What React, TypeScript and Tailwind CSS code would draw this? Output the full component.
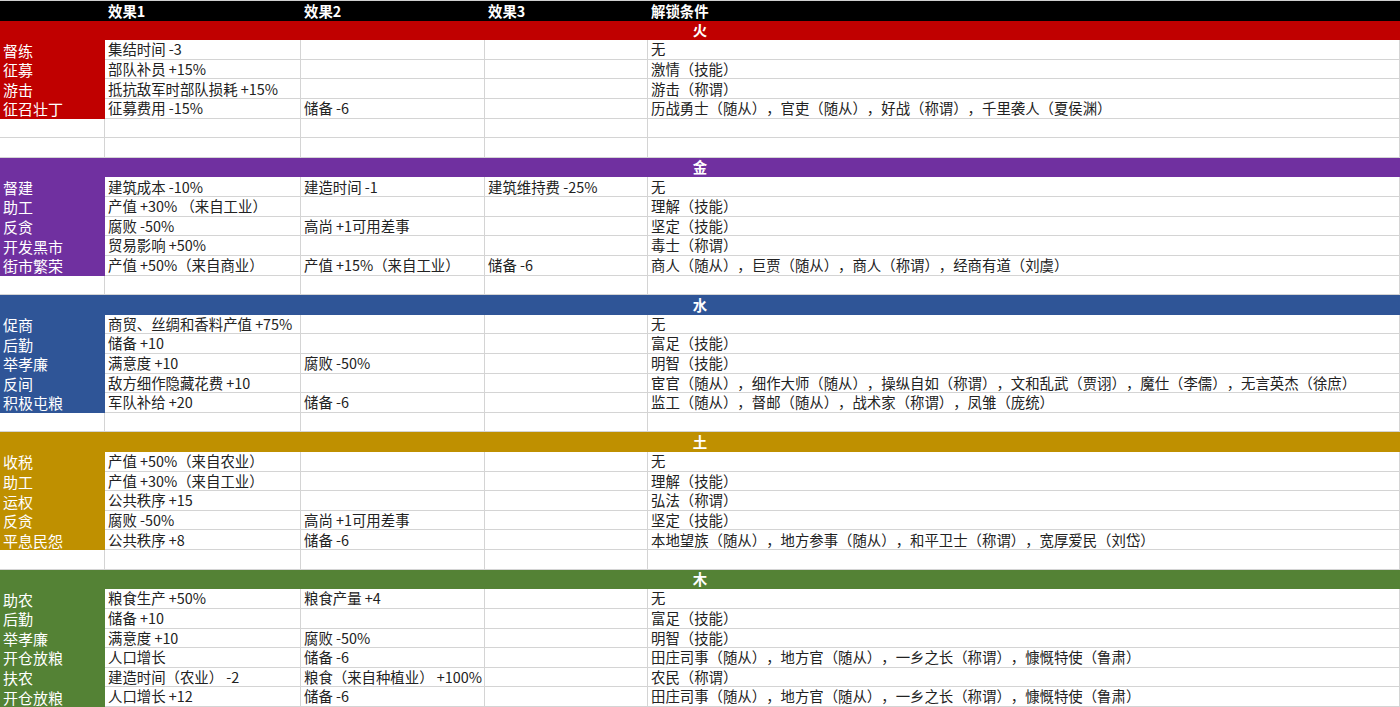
type Cells = [string, string, string, string];

interface Section {
  title: string;
  color: string;
  rows: Array<{ name: string; cells: Cells }>;
  blanks: number;
}

const sections: Section[] = [
  {
    title: "火",
    color: "bg-[#c00000]",
    blanks: 2,
    rows: [
      { name: "督练", cells: ["集结时间 -3", "", "", "无"] },
      { name: "征募", cells: ["部队补员 +15%", "", "", "激情（技能）"] },
      { name: "游击", cells: ["抵抗敌军时部队损耗 +15%", "", "", "游击（称谓）"] },
      {
        name: "征召壮丁",
        cells: ["征募费用 -15%", "储备 -6", "", "历战勇士（随从），官吏（随从），好战（称谓），千里袭人（夏侯渊）"],
      },
    ],
  },
  {
    title: "金",
    color: "bg-[#7030a0]",
    blanks: 1,
    rows: [
      { name: "督建", cells: ["建筑成本 -10%", "建造时间 -1", "建筑维持费 -25%", "无"] },
      { name: "助工", cells: ["产值 +30% （来自工业）", "", "", "理解（技能）"] },
      { name: "反贪", cells: ["腐败 -50%", "高尚 +1可用差事", "", "坚定（技能）"] },
      { name: "开发黑市", cells: ["贸易影响 +50%", "", "", "毒士（称谓）"] },
      {
        name: "街市繁荣",
        cells: ["产值 +50%（来自商业）", "产值 +15%（来自工业）", "储备 -6", "商人（随从），巨贾（随从），商人（称谓），经商有道（刘虞）"],
      },
    ],
  },
  {
    title: "水",
    color: "bg-[#2f5597]",
    blanks: 1,
    rows: [
      { name: "促商", cells: ["商贸、丝绸和香料产值 +75%", "", "", "无"] },
      { name: "后勤", cells: ["储备 +10", "", "", "富足（技能）"] },
      { name: "举孝廉", cells: ["满意度 +10", "腐败 -50%", "", "明智（技能）"] },
      {
        name: "反间",
        cells: [
          "敌方细作隐藏花费 +10",
          "",
          "",
          "宦官（随从），细作大师（随从），操纵自如（称谓），文和乱武（贾诩），魔仕（李儒），无言英杰（徐庶）",
        ],
      },
      {
        name: "积极屯粮",
        cells: ["军队补给 +20", "储备 -6", "", "监工（随从），督邮（随从），战术家（称谓），凤雏（庞统）"],
      },
    ],
  },
  {
    title: "土",
    color: "bg-[#bf9000]",
    blanks: 1,
    rows: [
      { name: "收税", cells: ["产值 +50%（来自农业）", "", "", "无"] },
      { name: "助工", cells: ["产值 +30%（来自工业）", "", "", "理解（技能）"] },
      { name: "运权", cells: ["公共秩序 +15", "", "", "弘法（称谓）"] },
      { name: "反贪", cells: ["腐败 -50%", "高尚 +1可用差事", "", "坚定（技能）"] },
      {
        name: "平息民怨",
        cells: ["公共秩序 +8", "储备 -6", "", "本地望族（随从），地方参事（随从），和平卫士（称谓），宽厚爱民（刘岱）"],
      },
    ],
  },
  {
    title: "木",
    color: "bg-[#548235]",
    blanks: 0,
    rows: [
      { name: "助农", cells: ["粮食生产 +50%", "粮食产量 +4", "", "无"] },
      { name: "后勤", cells: ["储备 +10", "", "", "富足（技能）"] },
      { name: "举孝廉", cells: ["满意度 +10", "腐败 -50%", "", "明智（技能）"] },
      {
        name: "开仓放粮",
        cells: ["人口增长", "储备 -6", "", "田庄司事（随从），地方官（随从），一乡之长（称谓），慷慨特使（鲁肃）"],
      },
      { name: "扶农", cells: ["建造时间（农业） -2", "粮食（来自种植业） +100%", "", "农民（称谓）"] },
      {
        name: "开仓放粮",
        cells: ["人口增长 +12", "储备 -6", "", "田庄司事（随从），地方官（随从），一乡之长（称谓），慷慨特使（鲁肃）"],
      },
    ],
  },
];

const cols = "grid grid-cols-[105px_196px_184px_163px_1fr]";
const cell = "flex items-center overflow-visible whitespace-nowrap px-[3px] border-b border-r border-[#d4d4d4]";

function DataRow({ color, name, cells }: { color: string; name: string; cells: Cells }) {
  return (
    <div className={`${cols} min-h-0 flex-1`}>
      <div className={`${color} flex items-center whitespace-nowrap px-[3px] text-[15px] text-white`}>{name}</div>
      {cells.map((text, i) => (
        <div key={i} className={`${cell} bg-white text-[#222]`}>
          {text}
        </div>
      ))}
    </div>
  );
}

function BlankRow() {
  return (
    <div className={`${cols} min-h-0 flex-1`}>
      {[0, 1, 2, 3, 4].map((i) => (
        <div key={i} className={`${cell} bg-white`} />
      ))}
    </div>
  );
}

export default function App() {
  return (
    <div
      className="flex h-[707px] w-[1400px] flex-col overflow-hidden bg-white text-[14.4px] leading-none [text-spacing-trim:space-all]"
      style={{ fontFamily: '"Noto Sans CJK SC", "Noto Sans", sans-serif' }}
    >
      {/* header */}
      <div className={`${cols} min-h-0 flex-1 border-t border-[#cfcfcf] bg-black font-bold text-white`}>
        <div />
        <div className="flex items-center px-[3px]">效果1</div>
        <div className="flex items-center px-[3px]">效果2</div>
        <div className="flex items-center px-[3px]">效果3</div>
        <div className="flex items-center px-[3px]">解锁条件</div>
      </div>

      {sections.map((sec) => (
        <div key={sec.title} className="contents">
          <div className={`${sec.color} flex min-h-0 flex-1 items-center justify-center font-bold text-white`}>
            {sec.title}
          </div>
          {sec.rows.map((r, i) => (
            <DataRow key={i} color={sec.color} name={r.name} cells={r.cells} />
          ))}
          {Array.from({ length: sec.blanks }).map((_, i) => (
            <BlankRow key={`b${i}`} />
          ))}
        </div>
      ))}
    </div>
  );
}
